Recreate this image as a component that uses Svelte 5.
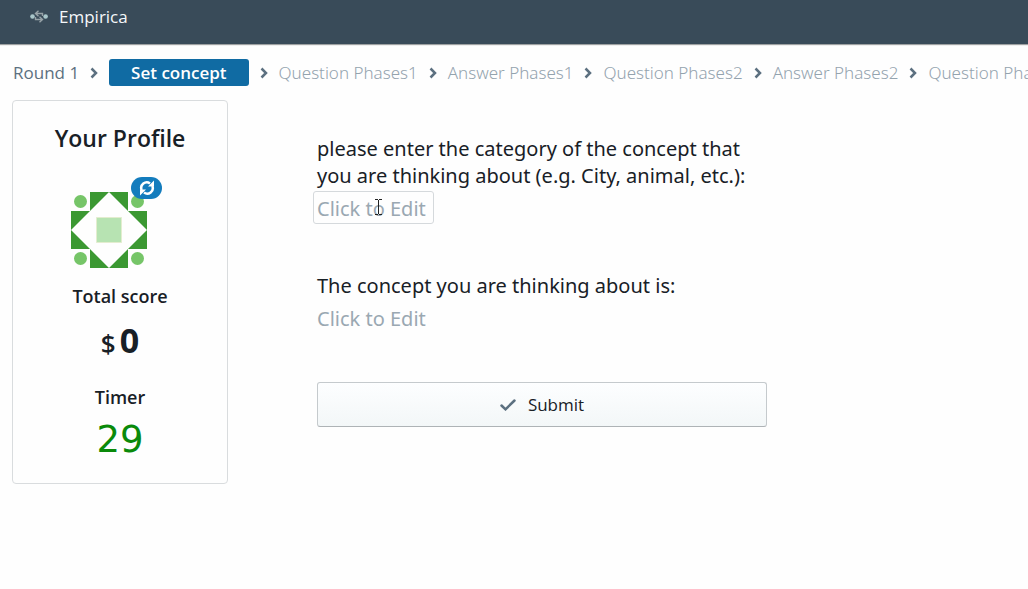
<script>
  const phases = ['Question Phases1', 'Answer Phases1', 'Question Phases2', 'Answer Phases2', 'Question Phases3'];
  let category = $state('');
  let concept = $state('');
</script>

{#snippet chevron()}
  <svg class="chevron" viewBox="0 0 8 12" aria-hidden="true"><path d="M1.5 1.5 6 6 1.5 10.5" /></svg>
{/snippet}

<header>
  <a class="brand" href="/">
    <svg viewBox="0 0 18 14" aria-hidden="true">
      <circle cx="2.500" cy="6.500" r="2.300" fill="#a9c6ca" />
      <circle cx="15.600" cy="6.500" r="2.300" fill="#a9c6ca" />
      <path d="M12.500 6V3.500H5.500M8.500 .800l-3 2.700 3 2.700M5.500 7v2.500H12.500M9.500 6.800l3 2.700-3 2.700" fill="none" stroke="#98a3a8" stroke-width="1.400" />
    </svg>
    <span>Empirica</span>
  </a>
</header>

<nav aria-label="Progress">
  <span class="round">Round 1</span>
  {@render chevron()}
  <span class="current" aria-current="step">Set concept</span>
  {#each phases as phase}
    {@render chevron()}
    <span class="phase">{phase}</span>
  {/each}
</nav>

<main>
  <aside>
    <h1>Your Profile</h1>
    <div class="avatar">
      <svg class="identicon" viewBox="0 0 76 76" role="img" aria-label="Avatar">
        <path fill="#3b9832" d="M19 0h38v19L38 0 19 19zM76 19v38H57l19-19-19-19zM57 76H19V57l19 19 19-19zM0 57V19h19L0 38l19 19z" />
        <g fill="#76c568">
          <circle cx="9.500" cy="9.500" r="6.500" /><circle cx="66.500" cy="9.500" r="6.500" />
          <circle cx="9.500" cy="66.500" r="6.500" /><circle cx="66.500" cy="66.500" r="6.500" />
        </g>
        <path d="M25.500 25.500h25v25h-25z" fill="#b7e3b2" stroke="#e3edcf" />
      </svg>
      <button class="refresh" aria-label="Change avatar">
        <svg viewBox="0 0 16 16" aria-hidden="true">
          <path d="M2.700 10A5.500 5.500 0 0 1 11 3.400M13.300 6A5.500 5.500 0 0 1 5 12.600" fill="none" stroke="#fff" stroke-width="2.500" />
          <path d="M9 6.500h6V.500zM7 9.500H1v6z" fill="#fff" />
        </svg>
      </button>
    </div>
    <h2>Total score</h2>
    <p class="score"><span>$</span>0</p>
    <h2>Timer</h2>
    <p class="timer">29</p>
  </aside>

  <form onsubmit={(e) => e.preventDefault()}>
    <label for="category">please enter the category of the concept that you are thinking about (e.g. City, animal, etc.):</label>
    <div class="field">
      <input id="category" class="outlined" placeholder="Click to Edit" bind:value={category} />
      <svg class="cursor" viewBox="0 0 7 16" aria-hidden="true"><path d="M0 .5h3M4 .5h3M3.500 1v14M0 15.500h3M4 15.500h3" stroke="#222" /></svg>
    </div>
    <label for="concept">The concept you are thinking about is:</label>
    <div class="field">
      <input id="concept" placeholder="Click to Edit" bind:value={concept} />
    </div>
    <button class="submit">
      <svg viewBox="0 0 16 12" aria-hidden="true"><path d="M1.500 6.500 5.500 10.300 14.500 1.500" /></svg>
      <span>Submit</span>
    </button>
  </form>
</main>

<style>
  :global(body) {
    margin: 0;
    background: #fefefe;
    color: #182026;
    font-family: "Open Sans", "Noto Sans", sans-serif;
    overflow-x: hidden;
  }
  header {
    height: 44px;
    background: #394b59;
    box-shadow: 0 1px 1px #10161a66;
  }
  .brand {
    display: flex;
    align-items: center;
    gap: 11px;
    width: max-content;
    padding: 4px 0 0 30px;
    color: #f5f8fa;
    font-size: 17px;
    line-height: 26px;
    text-decoration: none;
  }
  .brand svg {
    width: 18px;
    height: 14px;
  }
  nav {
    display: flex;
    align-items: center;
    gap: 11px;
    margin-top: 15px;
    padding-left: 13px;
    overflow: hidden;
    white-space: nowrap;
    font-size: 17px;
    line-height: 27px;
  }
  nav span {
    flex: none;
  }
  .round {
    color: #5c7080;
  }
  .phase {
    color: #94a3ae;
    font-family: "Noto Sans", sans-serif;
    font-weight: 300;
  }
  .current {
    padding: 0 22px;
    border-radius: 3px;
    background: #106ba3;
    color: #fff;
    font-weight: 600;
  }
  .chevron {
    flex: none;
    width: 8px;
    height: 12px;
    fill: none;
    stroke: #5c7080;
    stroke-width: 2.5;
  }
  main {
    display: grid;
    grid-template-columns: 216px minmax(0, 450px);
    column-gap: 89px;
    align-items: start;
    padding: 14px 12px;
  }
  aside {
    box-sizing: border-box;
    padding: 19px 20px 25px;
    border: 1px solid #d9dcde;
    border-radius: 4px;
    text-align: center;
  }
  h1, h2, p {
    margin: 0;
  }
  h1 {
    font-size: 23px;
    font-weight: 600;
    line-height: 36px;
  }
  .avatar {
    position: relative;
    width: 76px;
    margin: 36px 0 0 38px;
  }
  .identicon {
    display: block;
    width: 76px;
    height: 76px;
  }
  .refresh {
    position: absolute;
    top: -15px;
    right: -15px;
    display: grid;
    place-items: center;
    width: 31px;
    height: 22px;
    padding: 0;
    border: 0;
    border-radius: 11px;
    background: #137cbd;
  }
  .refresh svg {
    width: 16px;
    height: 16px;
  }
  h2 {
    margin-top: 15px;
    font-size: 18px;
    font-weight: 600;
    line-height: 27px;
  }
  .score {
    margin: 12px 0 23px;
    font-size: 34px;
    font-weight: 700;
    line-height: 36px;
  }
  .score span {
    margin-right: 4px;
    font-size: 26px;
    font-weight: 600;
  }
  .timer {
    margin-top: 11px;
    color: #0a8a0a;
    font-family: "DejaVu Sans", sans-serif;
    font-size: 37px;
    line-height: 36px;
  }
  form {
    padding-top: 35px;
    font-family: "Noto Sans", sans-serif;
    font-size: 20px;
    line-height: 27px;
  }
  label {
    display: block;
  }
  .field {
    position: relative;
    margin: 2px 0 48px -4px;
  }
  input {
    box-sizing: border-box;
    display: block;
    width: 121px;
    height: 33px;
    padding: 1px 3px 0;
    border: 1px solid transparent;
    border-radius: 3px;
    background: transparent;
    color: inherit;
    font: inherit;
  }
  input::placeholder {
    color: #9aa8b2;
    opacity: 1;
  }
  .outlined {
    border-color: #d5d9dc;
  }
  .cursor {
    position: absolute;
    top: 8px;
    left: 62px;
    width: 7px;
    height: 16px;
    fill: none;
  }
  .submit {
    display: flex;
    align-items: center;
    justify-content: center;
    gap: 12px;
    box-sizing: border-box;
    width: 100%;
    height: 45px;
    border: 1px solid #c5cacd;
    border-bottom-color: #aeb3b6;
    border-radius: 3px;
    background: linear-gradient(#fdfeff, #f3f7f8);
    color: #182026;
    font-family: "Open Sans", "Noto Sans", sans-serif;
    font-size: 17px;
  }
  .submit svg {
    width: 16px;
    height: 12px;
    fill: none;
    stroke: #5c7080;
    stroke-width: 2.5;
    stroke-linecap: round;
  }
</style>
